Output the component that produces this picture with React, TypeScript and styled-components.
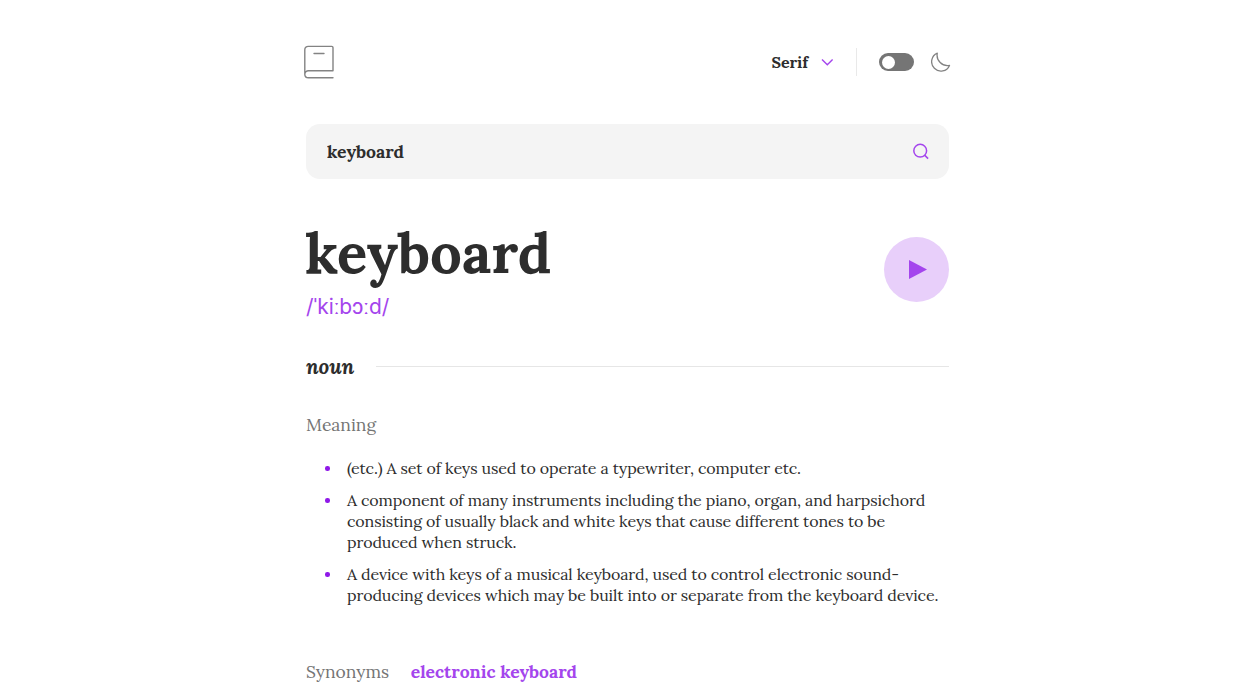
import React from 'react';
import styled, { createGlobalStyle } from 'styled-components';

const GlobalStyle = createGlobalStyle`
  *, *::before, *::after { box-sizing: border-box; }
  body { margin: 0; background: #fff; color: #2d2d2d; overflow: hidden; }
  body, button, input { font-family: Lora, "Liberation Serif", serif; }
  h1, h2, h3, p, ul { margin: 0; padding: 0; font-weight: inherit; }
  button { padding: 0; border: 0; background: none; cursor: pointer; }
  svg { display: block; flex: none; }
`;

const Page = styled.main`
  width: 643px;
  height: 691px;
  margin-left: 306px;
  padding-top: 40px;
`;

const Header = styled.header`
  display: flex;
  align-items: flex-end;
  justify-content: space-between;
  height: 39px;
  margin: 0 -2px;
`;

const Controls = styled.div`
  display: flex;
  align-items: center;
  height: 28px;
  margin-bottom: 3px;
`;

const FontPicker = styled.button`
  display: flex;
  align-items: center;
  gap: 13px;
  padding-right: 22px;
  height: 28px;
  border-right: 1px solid #e9e9e9;
  font-size: 16px;
  font-weight: 700;
  letter-spacing: -0.12px;
  color: #2d2d2d;
`;

const Toggle = styled.button`
  display: flex;
  align-items: center;
  width: 35px;
  height: 18px;
  margin: 0 17px 0 22px;
  padding-left: 2.5px;
  border-radius: 9px;
  background: #757575;
`;

const Knob = styled.span`
  width: 13px;
  height: 13px;
  border-radius: 50%;
  background: #fff;
`;

const SearchBar = styled.form`
  display: flex;
  align-items: center;
  height: 55px;
  margin-top: 45px;
  padding: 0 20px 0 21px;
  border-radius: 14px;
  background: #f4f4f4;
`;

const SearchInput = styled.input`
  flex: 1;
  height: 24px;
  padding: 0;
  border: 0;
  outline: 0;
  background: transparent;
  color: #2d2d2d;
  font-size: 17.6px;
  font-weight: 700;
`;

const Hero = styled.section`
  display: flex;
  justify-content: space-between;
  height: 97px;
  margin-top: 43px;
`;

const Word = styled.h1`
  margin-left: -1px;
  font-size: 56.3px;
  line-height: 60px;
  font-weight: 700;
`;

const Phonetic = styled.p`
  margin-top: 12px;
  font-family: Inter, sans-serif;
  font-size: 20.97px;
  line-height: 26px;
  letter-spacing: -0.05px;
  color: #a445ed;
`;

const PlayButton = styled.button`
  display: grid;
  place-items: center;
  width: 65px;
  height: 65px;
  margin-top: 15px;
  border-radius: 50%;
  background: #e8cffa;
`;

const PartOfSpeech = styled.h2`
  display: flex;
  align-items: center;
  gap: 22px;
  height: 26px;
  margin-top: 35px;
  font-size: 20.97px;
  line-height: 26px;
  letter-spacing: -0.2px;
  font-style: italic;
  font-weight: 700;

  &::after {
    content: '';
    flex: 1;
    height: 1px;
    margin-bottom: 1px;
    background: #e6e6e6;
  }
`;

const Label = styled.h3`
  font-size: 17.47px;
  line-height: 24px;
  color: #757575;
`;

const Meanings = styled.section`
  margin-top: 33px;
`;

const MeaningList = styled.ul`
  display: flex;
  flex-direction: column;
  gap: 11px;
  margin-top: 21px;
  padding-left: 19px;
  list-style: none;
`;

const MeaningItem = styled.li`
  display: flex;
  gap: 17.5px;
  font-size: 16px;
  line-height: 21px;
  letter-spacing: -0.115px;

  &::before {
    content: '';
    flex: none;
    width: 4.5px;
    height: 4.5px;
    margin-top: 8px;
    border-radius: 50%;
    background: #8f19e8;
  }
`;

const Synonyms = styled.section`
  display: flex;
  gap: 21.5px;
  margin-top: 54px;
`;

const Synonym = styled.a`
  font-size: 17.55px;
  line-height: 24px;
  font-weight: 700;
  color: #a445ed;
`;

const meanings = [
  '(etc.) A set of keys used to operate a typewriter, computer etc.',
  'A component of many instruments including the piano, organ, and harpsichord consisting of usually black and white keys that cause different tones to be produced when struck.',
  'A device with keys of a musical keyboard, used to control electronic sound-producing devices which may be built into or separate from the keyboard device.',
];

const BookIcon = () => (
  <svg width="30" height="34" viewBox="0 0 30 34" fill="none" stroke="#838383" strokeWidth="1.4" strokeLinecap="round" strokeLinejoin="round">
    <path d="M29 25.7V2.7c0-.8-.5-1.3-1.3-1.3H4.2C2.2 1.4.8 2.8.8 4.8v24.6M29 25.7H4.4C2.4 25.7.8 27.3.8 29.3s1.6 3.5 3.6 3.5H29" />
    <path d="M10 8.5h10" />
  </svg>
);

const ChevronIcon = () => (
  <svg width="13" height="8" viewBox="0 0 13 8" fill="none" stroke="#a445ed" strokeWidth="1.4">
    <path d="M1 1.5l5.3 5.3L11.6 1.5" />
  </svg>
);

const MoonIcon = () => (
  <svg width="20" height="20" viewBox="0 0 20 20" fill="none" stroke="#838383" strokeWidth="1.3" strokeLinecap="round" strokeLinejoin="round">
    <path d="M6.3 1.2A10.4 10.4 0 0 0 18.5 13.4A9.3 9.3 0 1 1 6.3 1.2z" />
  </svg>
);

const SearchIcon = () => (
  <svg width="17" height="17" viewBox="0 0 17 17" fill="none" stroke="#a445ed" strokeWidth="1.5">
    <circle cx="8.2" cy="7.7" r="6.4" />
    <path d="M12.6 12.1l3.5 3.5" />
  </svg>
);

const PlayIcon = () => (
  <svg width="20" height="19" viewBox="0 0 20 19" fill="#a445ed">
    <path d="M2 0v19L20 9.5z" />
  </svg>
);

export default function App() {
  return (
    <>
      <GlobalStyle />
      <Page>
        <Header>
          <BookIcon />
          <Controls>
            <FontPicker>
              Serif
              <ChevronIcon />
            </FontPicker>
            <Toggle aria-label="Toggle dark mode">
              <Knob />
            </Toggle>
            <MoonIcon />
          </Controls>
        </Header>
        <SearchBar>
          <SearchInput defaultValue="keyboard" aria-label="Search" />
          <SearchIcon />
        </SearchBar>
        <Hero>
          <div>
            <Word>keyboard</Word>
            <Phonetic>/ˈkiːbɔːd/</Phonetic>
          </div>
          <PlayButton aria-label="Play">
            <PlayIcon />
          </PlayButton>
        </Hero>
        <PartOfSpeech>noun</PartOfSpeech>
        <Meanings>
          <Label>Meaning</Label>
          <MeaningList>
            {meanings.map((text) => (
              <MeaningItem key={text}>
                <span>{text}</span>
              </MeaningItem>
            ))}
          </MeaningList>
        </Meanings>
        <Synonyms>
          <Label>Synonyms</Label>
          <Synonym>electronic keyboard</Synonym>
        </Synonyms>
      </Page>
    </>
  );
}
